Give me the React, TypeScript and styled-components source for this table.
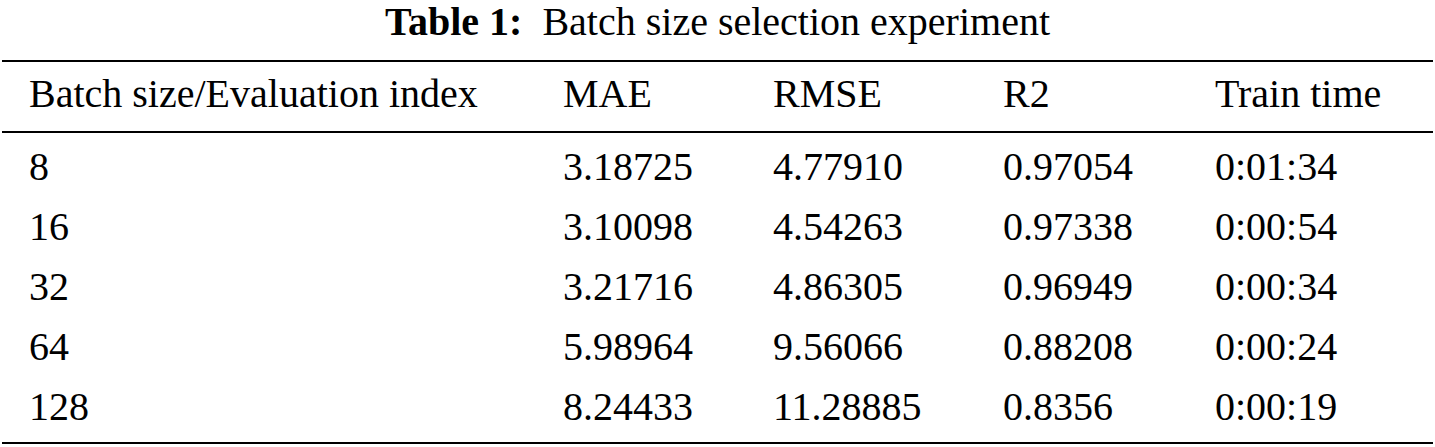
import React, { FC } from 'react';
import styled, { createGlobalStyle } from 'styled-components';

const GlobalStyle = createGlobalStyle`
    html, body {
        margin: 0;
        padding: 0;
        background: #ffffff;
    }
    body {
        font-family: "Liberation Serif", "Times New Roman", serif;
        color: #000000;
    }
`;

const Page = styled.div`
    width: 1435px;
    height: 447px;
    overflow: hidden;
    background: #ffffff;
`;

const Caption = styled.div`
    font-size: 40px;
    line-height: 44px;
    text-align: center;
    white-space: nowrap;
`;

const CaptionLabel = styled.span`
    font-weight: bold;
    margin-right: 20px;
`;

const TableBox = styled.div`
    margin: 16px 2px 0 2px;
    width: 1431px;
`;

const Rule = styled.div`
    height: 2px;
    background: #000000;
`;

const Row = styled.div<{ header?: boolean }>`
    display: grid;
    grid-template-columns: 534px 210px 230px 212px 1fr;
    padding-left: 27px;
    height: ${props => props.header ? '69px' : '60px'};
    padding-top: ${props => props.header ? '10px' : '12px'};
    box-sizing: border-box;
    font-size: 40px;
    line-height: 44px;
    white-space: nowrap;
`;

const Body = styled.div`
    padding-bottom: 9px;
`;

const Cell = styled.span`
    display: block;
`;

const COLUMNS = ['Batch size/Evaluation index', 'MAE', 'RMSE', 'R2', 'Train time'];

const ROWS: string[][] = [
    ['8', '3.18725', '4.77910', '0.97054', '0:01:34'],
    ['16', '3.10098', '4.54263', '0.97338', '0:00:54'],
    ['32', '3.21716', '4.86305', '0.96949', '0:00:34'],
    ['64', '5.98964', '9.56066', '0.88208', '0:00:24'],
    ['128', '8.24433', '11.28885', '0.8356', '0:00:19'],
];

const App: FC = () => {
    return (
        <Page>
            <GlobalStyle />
            <Caption>
                <CaptionLabel>Table 1:</CaptionLabel>Batch size selection experiment
            </Caption>
            <TableBox>
                <Rule />
                <Row header>
                    {COLUMNS.map(col => <Cell key={col}>{col}</Cell>)}
                </Row>
                <Rule />
                <Body>
                    {ROWS.map(row => (
                        <Row key={row[0]}>
                            {row.map((value, i) => <Cell key={i}>{value}</Cell>)}
                        </Row>
                    ))}
                </Body>
                <Rule />
            </TableBox>
        </Page>
    );
};

export default App;
